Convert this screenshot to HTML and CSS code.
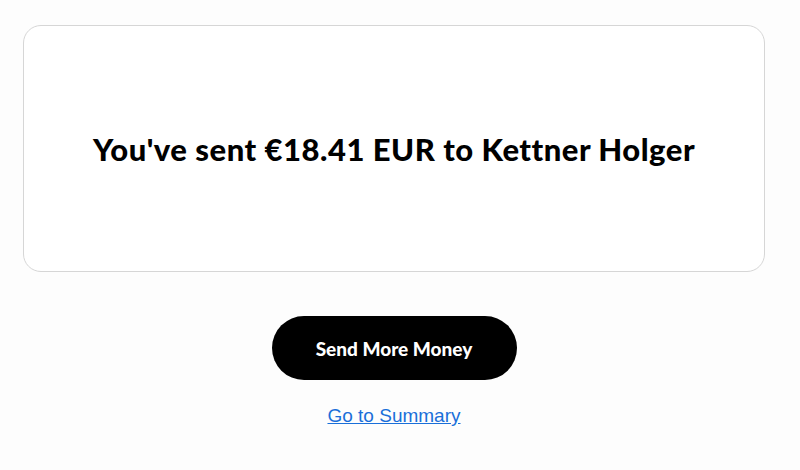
FILE: index.html
```html
<!DOCTYPE html>
<html lang="en">
<head>
<meta charset="utf-8">
<title>Transfer sent</title>
<link rel="stylesheet" href="styles.css">
</head>
<body>
<main class="page">
  <section class="card">
    <h1 class="title">You've sent €18.41 EUR to Kettner Holger</h1>
  </section>
  <div class="actions">
    <button class="btn-primary" type="button">Send More Money</button>
    <a class="link" href="#">Go to Summary</a>
  </div>
</main>
</body>
</html>
```
FILE: styles.css
```css
html, body {
  margin: 0;
  padding: 0;
  background: #fdfdfd;
}
.page {
  width: 788px;
  padding-top: 25px;
  box-sizing: border-box;
  display: flex;
  flex-direction: column;
  align-items: center;
}
.card {
  width: 742px;
  height: 247px;
  box-sizing: border-box;
  background: #fff;
  border: 1px solid #d6d6d6;
  border-radius: 18px;
  display: flex;
  align-items: center;
  justify-content: center;
}
.title {
  margin: 0;
  font-family: Lato, "Noto Sans", sans-serif;
  font-weight: 900;
  font-size: 31px;
  color: #000;
  letter-spacing: 0.5px;
}
.actions {
  margin-top: 44px;
  display: flex;
  flex-direction: column;
  align-items: center;
}
.btn-primary {
  width: 245px;
  height: 64px;
  border: none;
  border-radius: 32px;
  background: #000;
  color: #fff;
  font-family: Lato, "Noto Sans", sans-serif;
  font-weight: 900;
  font-size: 19px;
  letter-spacing: 0;
  cursor: pointer;
}
.link {
  margin-top: 25px;
  font-family: "Liberation Sans", Arial, sans-serif;
  font-size: 19px;
  color: #1a6fd9;
  text-decoration: underline;
}
```
